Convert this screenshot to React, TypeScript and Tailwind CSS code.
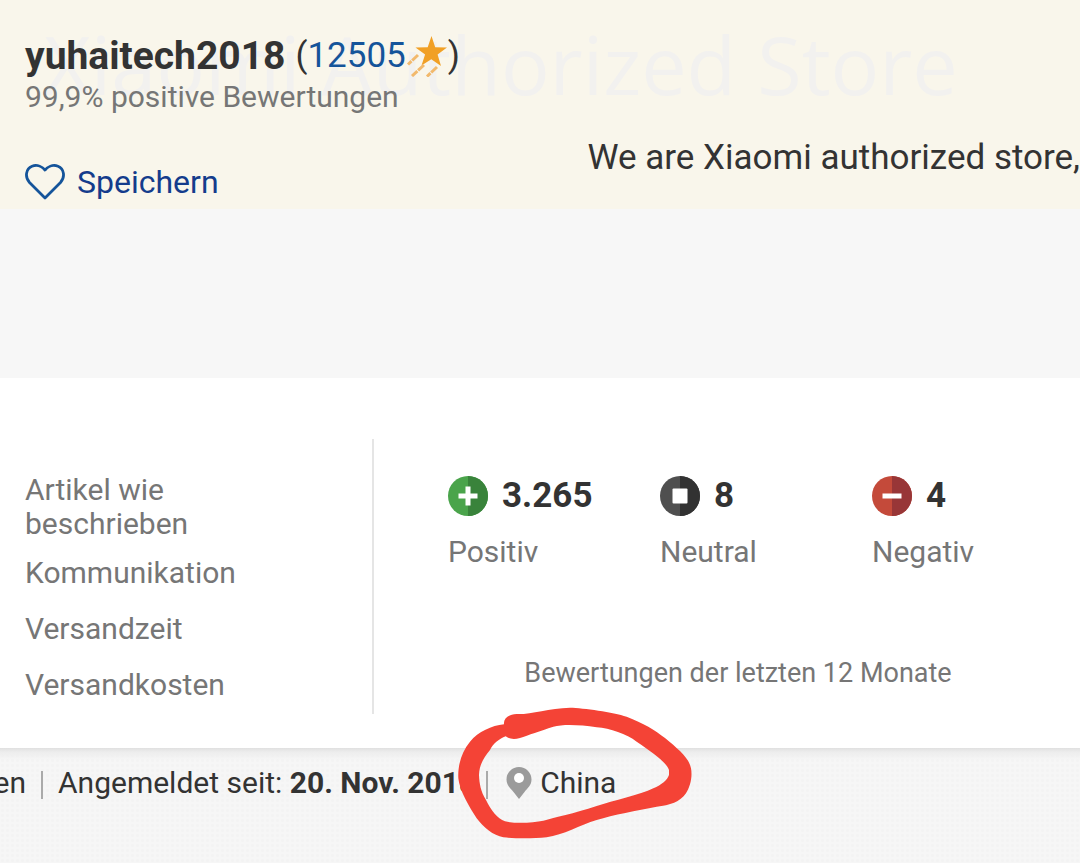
import React from "react";

const details = [
  "Artikel wie beschrieben",
  "Kommunikation",
  "Versandzeit",
  "Versandkosten",
];

function ShootingStar() {
  return (
    <svg viewBox="0 0 42 42" className="h-[42px] w-[42px]" aria-hidden="true">
      <path
        d="M25.500 1l3.700 11.300 11.800.2-9.400 7.100 3.400 11.400-9.700-6.700-9.800 6.300 3.600-11.200L9.500 12.500l12.200-.2z"
        fill="#f1a025"
      />
      <path
        d="M12 20L2 29.500M18 30L6 41M31 32L21 41.500"
        stroke="#f2b96c"
        strokeWidth="3"
        strokeDasharray="8 1 9 1"
        fill="none"
      />
    </svg>
  );
}

function Heart() {
  return (
    <svg viewBox="0 0 40 36" className="h-9 w-10" aria-hidden="true">
      <path
        d="M20 34L4.500 18.500C-.5 13 1 4.500 7 2.200C12.500.2 17.500 3 20 6C22.500 3 27.500.2 33 2.200C39 4.500 40.500 13 35.500 18.500z"
        fill="none"
        stroke="#15549a"
        strokeWidth="2.800"
        strokeLinejoin="round"
      />
    </svg>
  );
}

function PositiveIcon() {
  return (
    <svg viewBox="0 0 40 40" className="h-10 w-10" aria-hidden="true">
      <circle cx="20" cy="20" r="20" fill="#4aa44b" />
      <path d="M20 0a20 20 0 0 1 0 40z" fill="#39833b" />
      <path d="M17.500 10.500h5v7h7v5h-7v7h-5v-7h-7v-5h7z" fill="#fff" />
    </svg>
  );
}

function NeutralIcon() {
  return (
    <svg viewBox="0 0 40 40" className="h-10 w-10" aria-hidden="true">
      <circle cx="20" cy="20" r="20" fill="#4f4f4f" />
      <path d="M20 0a20 20 0 0 1 0 40z" fill="#323232" />
      <rect x="12.500" y="12.500" width="15" height="15" rx="1" fill="#fff" />
    </svg>
  );
}

function NegativeIcon() {
  return (
    <svg viewBox="0 0 40 40" className="h-10 w-10" aria-hidden="true">
      <circle cx="20" cy="20" r="20" fill="#c44a3a" />
      <path d="M20 0a20 20 0 0 1 0 40z" fill="#983637" />
      <rect x="10.500" y="17.500" width="19" height="5" fill="#fff" />
    </svg>
  );
}

function Pin() {
  return (
    <svg viewBox="0 0 26 32" className="h-8 w-[26px]" aria-hidden="true">
      <path
        d="M13 0a12.500 12.500 0 0 1 12.500 12.500c0 6-4 8.500-7 12.500L13 32l-5.500-7c-3-4-7-6.500-7-12.500A12.500 12.500 0 0 1 13 0z"
        fill="#9b9b9b"
      />
      <circle cx="13" cy="11" r="5" fill="#fff" />
    </svg>
  );
}

// hand drawn marker around the location
function Marker() {
  return (
    <svg
      viewBox="0 0 810 519"
      className="pointer-events-none absolute -top-[76px] -left-[66px] h-[173px] w-[270px] max-w-none"
      aria-hidden="true"
    >
      <path
        d="M192 103C190 86 205 73 230 72C270 74 325 55 390 53C430 54 520 66 560 80C610 99 645 120 675 144C715 177 748 205 753 235C758 262 750 290 738 310C720 336 690 346 650 350C590 362 520 374 470 390C420 405 370 435 320 442C280 446 225 446 190 442C160 437 130 412 110 385C88 352 58 300 55 265C53 225 65 185 90 155C115 125 155 107 192 103zM197 139C178 147 160 160 150 180C130 205 118 225 117 255C118 280 122 305 138 330C153 360 172 386 195 394C230 402 280 398 310 392C345 382 400 371 470 348C520 332 600 315 640 295C665 284 682 270 687 255V240C681 220 645 192 590 155C560 132 510 115 470 112C420 104 370 102 340 110C300 123 265 135 240 144C222 149 207 147 197 139z"
        fill="#f44336"
        fillRule="evenodd"
      />
    </svg>
  );
}

const stats = [
  { label: "Positiv", value: "3.265", icon: <PositiveIcon /> },
  { label: "Neutral", value: "8", icon: <NeutralIcon /> },
  { label: "Negativ", value: "4", icon: <NegativeIcon /> },
];

export default function App() {
  return (
    <div className="flex min-h-screen flex-col overflow-hidden bg-[#f7f7f7] font-['Roboto',sans-serif] text-[30px] text-[#333]">
      <header className="relative flex justify-between overflow-hidden bg-[#f9f6eb] pt-8 pb-[7px] pl-[25px] whitespace-nowrap">
        <p className="absolute top-2 left-[44px] font-['Open_Sans',sans-serif] text-[81px] leading-[112px] text-[#f2f1ef]">
          Xiaomi Authorized Store
        </p>
        <div className="relative">
          <div className="flex h-12 items-center">
            <h1 className="text-[39px] font-bold">yuhaitech2018</h1>
            <span className="ml-[10px] flex items-center text-[35px]">
              (
              <a href="#feedback" className="text-[#15549a]">
                12505
              </a>
              <ShootingStar />)
            </span>
          </div>
          <p className="leading-[34px] text-[#767676]">
            99,9% positive Bewertungen
          </p>
          <button
            type="button"
            className="mt-12 flex h-10 items-center gap-3 text-[32px] text-[#143c8c]"
          >
            <Heart />
            Speichern
          </button>
        </div>
        <p className="relative mt-[106px] text-[35px] leading-10">
          We are Xiaomi authorized store,
        </p>
      </header>

      <main className="mt-[169px] flex bg-white pt-[61px] pb-[34px]">
        <ul className="flex w-[374px] shrink-0 flex-col gap-[22px] border-r-2 border-[#e5e5e5] pt-[34px] pr-[120px] pb-3 pl-[25px] leading-[34px] text-[#767676]">
          {details.map((d) => (
            <li key={d} className="first:-mb-[7px]">
              {d}
            </li>
          ))}
        </ul>
        <section className="grow pt-[34px] pl-[74px]">
          <dl className="flex">
            {stats.map((s) => (
              <div key={s.label} className="flex w-[212px] flex-col-reverse gap-4">
                <dt className="leading-[34px] text-[#767676]">{s.label}</dt>
                <dd className="flex items-center gap-[14px] text-[35px] leading-[46px] font-bold">
                  {s.icon}
                  {s.value}
                </dd>
              </div>
            ))}
          </dl>
          <p className="mt-[86px] pr-14 text-center text-[27px] leading-9 text-[#767676]">
            Bewertungen der letzten 12 Monate
          </p>
        </section>
      </main>

      <footer className="flex grow items-start bg-[#f6f6f6] bg-[linear-gradient(#e0e0e0,#ededed_4px,#f6f6f600_12px),radial-gradient(#f3f3f3_1px,#f3f3f300_2px)] bg-[size:auto,5px_5px] pt-[18px] leading-[34px] whitespace-nowrap">
        <span className="flex w-[26px] justify-end">en</span>
        <span className="mx-[15px] mt-[5px] h-[28px] w-[2px] bg-[#aaa]" />
        <span>
          Angemeldet seit: <b>20. Nov. 2018</b>
        </span>
        <span className="mt-[5px] mr-[18px] ml-[10px] h-[28px] w-[2px] bg-[#aaa]" />
        <span className="relative flex items-center gap-2">
          <Pin />
          China
          <Marker />
        </span>
      </footer>
    </div>
  );
}
